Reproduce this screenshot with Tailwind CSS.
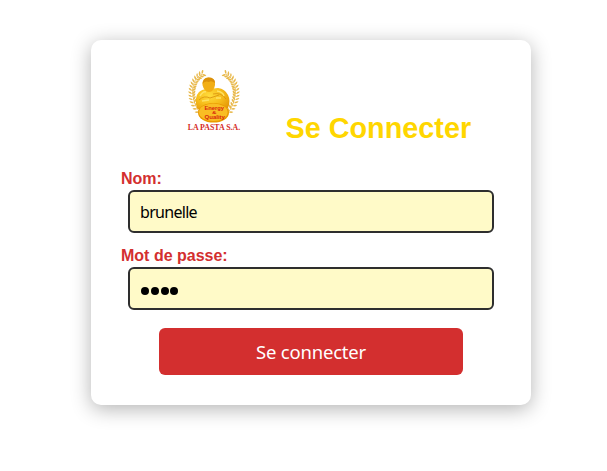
<!DOCTYPE html>
<html lang="fr">
<head>
<meta charset="utf-8">
<title>Se Connecter</title>
<script src="https://cdn.jsdelivr.net/npm/@tailwindcss/browser@4"></script>
</head>
<body class="bg-white h-[471px] overflow-hidden pt-10 pl-[91px] font-['Liberation_Sans',sans-serif]">
<main class="w-[440px] h-[365px] rounded-[10px] bg-white px-[30px] pt-[30px] shadow-[0_4px_20px_rgba(0,0,0,0.3)]">
  <header class="flex h-[98px]">
    <svg class="ml-[64px] shrink-0" width="60" height="62" viewBox="0 0 60 62">
      <defs>
        <radialGradient id="gold" cx=".4" cy=".3" r=".75"><stop offset="0" stop-color="#ffdc3c"/><stop offset=".5" stop-color="#f7be1c"/><stop offset="1" stop-color="#e29204"/></radialGradient>
        <path id="leaf" d="M0 0Q-3.400 -.2 -3.800 -3Q-.8 -2.600 0 0Q.4 -3 3.400 -3.200Q3.400 -.4 0 0Z"/>
        <g id="branch" fill="#e8b84a">
          <path d="M17 4Q8 9 7.500 20Q7.500 34 16 44" fill="none" stroke="#e8b84a" stroke-width=".8"/>
          <use href="#leaf" transform="translate(17 4.200) rotate(64)"/>
          <use href="#leaf" transform="translate(14.500 5.800) rotate(56)"/>
          <use href="#leaf" transform="translate(12.500 7.800) rotate(48)"/>
          <use href="#leaf" transform="translate(10.800 10) rotate(38)"/>
          <use href="#leaf" transform="translate(9.400 12.600) rotate(28)"/>
          <use href="#leaf" transform="translate(8.400 15.400) rotate(19)"/>
          <use href="#leaf" transform="translate(7.700 18.200) rotate(10)"/>
          <use href="#leaf" transform="translate(7.300 21) rotate(3)"/>
          <use href="#leaf" transform="translate(7.200 24) rotate(-3)"/>
          <use href="#leaf" transform="translate(7.400 27) rotate(-9)"/>
          <use href="#leaf" transform="translate(8 30) rotate(-14)"/>
          <use href="#leaf" transform="translate(9 33) rotate(-20)"/>
          <use href="#leaf" transform="translate(10.500 36) rotate(-26)"/>
          <use href="#leaf" transform="translate(12.300 39) rotate(-32)"/>
          <use href="#leaf" transform="translate(14.500 42) rotate(-38)"/>
        </g>
      </defs>
      <use href="#branch"/>
      <use href="#branch" transform="translate(58 0) scale(-1 1)"/>
      <path d="M12 38Q9 27 14 22Q18 18.500 24 19L33 18Q40 19 43 25Q46 31 43 38Q37 43 28 43Q16 43 12 38Z" fill="url(#gold)"/>
      <path d="M17.500 15Q17 7.500 23.500 7.500Q30.500 7.500 30 15Q29 21.500 24 22Q19 21.500 17.500 15Z" fill="#f2ae14"/>
      <path d="M17.500 14Q18 7.500 23.500 7.500Q30 7.500 30 13Q26 10 24 12Q20 10.500 17.500 14Z" fill="#db900a"/>
      <path d="M14 30Q19 25 25 28L34 25M28 24Q36 22 41 29" fill="none" stroke="#d8900e" stroke-width=".8"/>
      <path d="M15 26Q18 21 21 22M32 21Q38 22 39 26M17 31L24 30M31 28L36 28" fill="none" stroke="#ffe263" stroke-width="1.500"/>
      <ellipse cx="28.500" cy="42.700" rx="15.500" ry="9.800" fill="#e99a00"/>
      <ellipse cx="28.300" cy="42.200" rx="14.300" ry="8.800" fill="#f9bd24"/>
      <g fill="#d8260c" font-family="Liberation Sans" font-weight="700" font-size="4.500">
        <text x="19.500" y="40.300" textLength="19.500" lengthAdjust="spacingAndGlyphs">Energy</text>
        <text x="27" y="44.400" font-size="4" textLength="4.500" lengthAdjust="spacingAndGlyphs">&amp;</text>
        <text x="19.500" y="48.600" textLength="20.500" lengthAdjust="spacingAndGlyphs">Quality</text>
      </g>
      <text x="2.700" y="60" fill="#d52b25" font-family="Liberation Serif" font-weight="700" font-size="7.500" textLength="52.500" lengthAdjust="spacingAndGlyphs">LA PASTA S.A.</text>
    </svg>
    <h1 class="ml-[40.5px] mt-[40px] text-[28.8px] leading-9 font-bold text-[#ffd600] whitespace-nowrap">Se Connecter</h1>
  </header>
  <form>
    <label for="nom" class="block h-[22px] leading-[21px] text-base font-bold text-[#d32f2f]">Nom:</label>
    <input id="nom" value="brunelle" class="block ml-[7px] w-[366px] h-[43px] rounded-md border-2 border-[#2e2e2e] bg-[#fffac8] px-[10px] text-base tracking-[-0.7px] text-black font-['Noto_Sans',sans-serif]">
    <label for="mdp" class="block mt-3 h-[22px] leading-[21px] text-base font-bold text-[#d32f2f]">Mot de passe:</label>
    <div id="mdp" class="flex items-center gap-[1.8px] ml-[7px] w-[366px] h-[43px] rounded-md border-2 border-[#2e2e2e] bg-[#fffac8] px-[11px] pt-1">
      <i class="size-2 rounded-full bg-black"></i><i class="size-2 rounded-full bg-black"></i><i class="size-2 rounded-full bg-black"></i><i class="size-2 rounded-full bg-black"></i>
    </div>
    <button type="button" class="block mt-[18px] ml-[38px] w-[304px] h-[47px] rounded-md bg-[#d32f2f] text-white text-[18.5px] tracking-[-0.2px] font-['Noto_Sans',sans-serif]">Se connecter</button>
  </form>
</main>
</body>
</html>
